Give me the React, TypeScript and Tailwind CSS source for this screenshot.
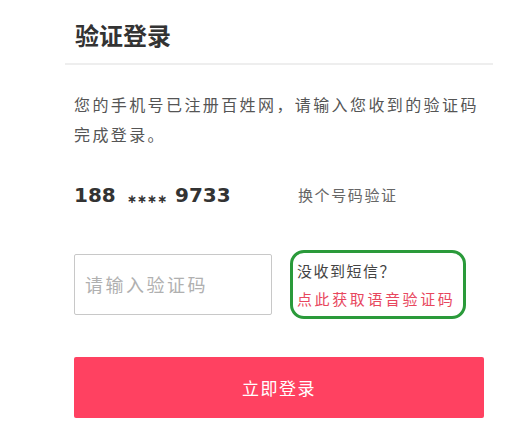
import React from "react";

const cjk = "font-['Noto_Sans_CJK_SC','Noto_Sans',sans-serif]";

export default function App() {
  return (
    <main className={`w-[520px] h-[428px] bg-white overflow-hidden ${cjk}`}>
      <div className="ml-[65px] w-[428px] pt-[22px]">
        <h1 className="px-[10px] text-[24px] leading-[26px] font-bold text-[#333]">验证登录</h1>
        <div className="mt-[15px] h-[2px] bg-[#eeeeee]" />

        <p className="mt-[24px] px-[9px] text-[16px] leading-[30px] tracking-[2.4px] text-[#555]">
          您的手机号已注册百姓网，请输入您收到的验证码完成登录。
        </p>

        <div className="mt-[31px] px-[9px] h-[30px] flex items-center">
          <span className="w-[224px] font-['DejaVu_Sans',sans-serif] font-bold text-[20px] text-[#333] flex items-center">
            188
            <span className="ml-[11px] mr-[8px] mt-[7px] text-[12px] leading-none">∗∗∗∗</span>
            9733
          </span>
          <span className="text-[15px] tracking-[1.6px] text-[#666]">换个号码验证</span>
        </div>

        <div className="mt-[40px] px-[9px] flex items-center">
          <div className="w-[198px] h-[61px] border border-[#c8c8c8] rounded-[2px] flex items-center pl-[10px] text-[18px] tracking-[2.5px] text-[#b0b0b0]">
            请输入验证码
          </div>
          <div className="ml-[18px] w-[176px] h-[69px] border-[3px] border-[#2a9a3a] rounded-[14px] px-[4px] pt-[7px]">
            <div className="text-[15px] leading-[22px] tracking-[1.5px] text-[#444]">没收到短信？</div>
            <div className="mt-[6px] text-[15px] leading-[22px] tracking-[2.6px] text-[#e8475e]">点此获取语音验证码</div>
          </div>
        </div>

        <button className="mt-[38px] ml-[9px] w-[410px] h-[61px] bg-[#ff4161] rounded-[2px] text-white text-[17px] tracking-[1.5px]">
          立即登录
        </button>
      </div>
    </main>
  );
}
